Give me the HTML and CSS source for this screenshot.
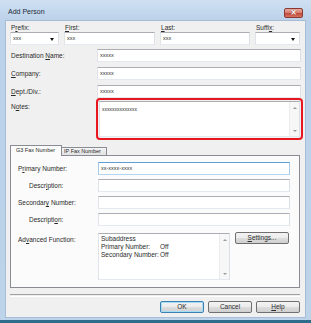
FILE: index.html
```html
<!DOCTYPE html>
<html lang="en">
<head>
    <meta charset="UTF-8">
    <meta name="viewport" content="width=device-width, initial-scale=1.0">
    <title>Add Person</title>
    <link rel="stylesheet" href="styles.css">
</head>
<body>

    <div class="window">
        <div class="titlebar">
            <span class="title">Add Person</span>
            <span class="close-btn">×</span>
        </div>

        <div class="client">
            <div class="name-grid">
                <label>P<u>r</u>efix:</label>
                <label><u>F</u>irst:</label>
                <label><u>L</u>ast:</label>
                <label>Suffi<u>x</u>:</label>
                <div class="box combo">xxx<span class="arrow"></span></div>
                <div class="box">xxx</div>
                <div class="box">xxx</div>
                <div class="box combo"><span class="arrow"></span></div>
            </div>

            <div class="form-row first">
                <label>Destination <u>N</u>ame:</label>
                <div class="box">xxxxx</div>
            </div>
            <div class="form-row">
                <label><u>C</u>ompany:</label>
                <div class="box">xxxxx</div>
            </div>
            <div class="form-row">
                <label><u>D</u>ept./Div.:</label>
                <div class="box">xxxxx</div>
            </div>

            <div class="notes-row">
                <label>N<u>o</u>tes:</label>
                <div class="highlight">
                    <div class="box textarea">
                        <span class="text">xxxxxxxxxxxxxx</span>
                        <div class="scrollbar">
                            <span class="arr-up"></span>
                            <span class="arr-down"></span>
                        </div>
                    </div>
                </div>
            </div>

            <div class="tabs">
                <div class="tab active">G3 Fax Number</div>
                <div class="tab">IP Fax Number</div>
            </div>
            <div class="panel">
                <div class="panel-row">
                    <label>P<u>r</u>imary Number:</label>
                    <div class="box focus wide">xx-xxxx-xxxx</div>
                </div>
                <div class="panel-row">
                    <label class="indent">Descr<u>i</u>ption:</label>
                    <div class="box wide"></div>
                </div>
                <div class="panel-row">
                    <label>Secondar<u>y</u> Number:</label>
                    <div class="box wide"></div>
                </div>
                <div class="panel-row">
                    <label class="indent">Descripti<u>o</u>n:</label>
                    <div class="box wide"></div>
                </div>
                <div class="panel-row advanced">
                    <label>Ad<u>v</u>anced Function:</label>
                    <div class="box listbox">
                        <div class="list-text">
                            <div>Subaddress</div>
                            <div class="pair"><span>Primary Number:</span><span>Off</span></div>
                            <div class="pair"><span>Secondary Number:</span><span>Off</span></div>
                        </div>
                        <div class="scrollbar">
                            <span class="arr-up"></span>
                            <span class="arr-down"></span>
                        </div>
                    </div>
                    <button class="btn settings"><u>S</u>ettings...</button>
                </div>
            </div>

            <div class="separator"></div>

            <div class="buttons">
                <button class="btn default">OK</button>
                <button class="btn">Cancel</button>
                <button class="btn"><u>H</u>elp</button>
            </div>
        </div>
    </div>

</body>
</html>
```

FILE: styles.css
```css
:root {
    --frame-color: #bdd3ea;
    --client-color: #f0f0f0;
    --panel-color: #fbfbfb;
    --text-color: #2a2a2a;
    --edge-color: #898c95;
    --input-border: #abadb3;
}

body {
    margin: 0;
    font-family: 'Liberation Sans', Arial, sans-serif;
    font-size: 6.5px;
    color: var(--text-color);
    background: var(--frame-color);
}

u {
    text-decoration-thickness: 0.5px;
    text-underline-offset: 1px;
}

.window {
    width: 311px;
    height: 323px;
    box-sizing: border-box;
    display: flex;
    flex-direction: column;
    padding: 0 5px 2px 5px;
    background: linear-gradient(180deg, #cfe0f2 0px, #bcd2ea 20px, #bdd3ea 100%);
    border-bottom: 3px solid #2f6c8c;
}

.titlebar {
    height: 20px;
    display: flex;
    align-items: center;
    justify-content: space-between;
    padding: 3px 3px 0 3px;
    box-sizing: border-box;
}

.title {
    font-size: 7px;
    color: #1c2a38;
}

.close-btn {
    width: 17px;
    height: 8px;
    margin-top: 2px;
    display: flex;
    align-items: center;
    justify-content: center;
    border: 1px solid #8a3a33;
    border-radius: 2px;
    background: linear-gradient(180deg, #e9a99f 0%, #d57a6d 50%, #c24a3a 55%, #d4735f 100%);
    color: #fff;
    font-family: 'DejaVu Sans', sans-serif;
    font-weight: bold;
    font-size: 8px;
    line-height: 8px;
    text-shadow: 0 0 1px #6a1d16;
}

.client {
    flex: 1;
    box-sizing: border-box;
    background: var(--client-color);
    border: 1px solid #a6bdd5;
    padding: 2px 4px 0 4px;
}

label {
    white-space: nowrap;
}

.box {
    box-sizing: border-box;
    height: 13px;
    background: #fff;
    border: 1px solid var(--input-border);
    border-color: #abadb3 #dbdfe6 #e3e9ef #e2e3ea;
    padding: 0 2px;
    line-height: 11px;
    font-size: 5.5px;
    position: relative;
}

.combo .arrow {
    position: absolute;
    right: 4px;
    top: 5px;
    border-left: 2.5px solid transparent;
    border-right: 2.5px solid transparent;
    border-top: 3px solid #111;
}

.name-grid {
    display: grid;
    grid-template-columns: 49px 91px 90px 45px;
    grid-template-rows: 9px 13px;
    column-gap: 5px;
}

.name-grid label {
    line-height: 9px;
    padding-left: 1px;
}

.form-row {
    display: grid;
    grid-template-columns: 87px 204px;
    align-items: center;
    margin-top: 5px;
}

.form-row.first {
    margin-top: 4px;
}

.form-row label {
    padding-left: 1px;
}

.notes-row {
    display: grid;
    grid-template-columns: 86px 207px;
    align-items: start;
}

.notes-row label {
    padding-left: 1px;
    margin-top: 5px;
    line-height: 8px;
}

.highlight {
    border: 2px solid #e8171f;
    border-radius: 4px;
    padding: 1px;
    height: 42px;
    box-sizing: border-box;
}

.textarea {
    height: 36px;
    display: flex;
    justify-content: space-between;
    padding: 0 0 0 2px;
}

.textarea .text {
    line-height: 8px;
    padding-top: 3px;
    font-size: 5px;
}

.scrollbar {
    width: 10px;
    display: flex;
    flex-direction: column;
    justify-content: space-between;
    align-items: center;
    padding: 5px 0 4px 0;
    box-sizing: border-box;
    background: #f7f7f7;
    border-left: 1px solid #ececec;
}

.arr-up {
    border-left: 2px solid transparent;
    border-right: 2px solid transparent;
    border-bottom: 2px solid #9a9a9a;
}

.arr-down {
    border-left: 2px solid transparent;
    border-right: 2px solid transparent;
    border-top: 2px solid #9a9a9a;
}

.tabs {
    display: flex;
    align-items: flex-end;
    height: 10px;
    margin-top: 5px;
    position: relative;
    z-index: 1;
}

.tab {
    box-sizing: border-box;
    height: 8px;
    width: 46px;
    margin-left: -1px;
    border: 1px solid var(--edge-color);
    border-bottom: none;
    background: linear-gradient(180deg, #f4f4f4, #e2e2e2);
    font-size: 5.5px;
    line-height: 7px;
    padding-left: 2px;
    white-space: nowrap;
}

.tab.active {
    height: 11px;
    width: 52px;
    margin-left: 0;
    margin-bottom: -1px;
    background: var(--panel-color);
    padding-left: 5px;
    line-height: 9px;
    position: relative;
    z-index: 2;
}

.panel {
    box-sizing: border-box;
    width: 290px;
    height: 133px;
    border: 1px solid var(--edge-color);
    background: var(--panel-color);
    padding: 6px 0 0 7px;
}

.panel-row {
    display: grid;
    grid-template-columns: 80px 192px;
    align-items: center;
    margin-bottom: 4px;
}

.panel-row label.indent {
    padding-left: 11px;
}

.box.focus {
    border-color: #5a9fd8 #a8cbeb #b4d3ef #a8cbeb;
}

.panel-row.advanced {
    grid-template-columns: 80px 132px 54px;
    column-gap: 0;
    align-items: start;
    margin-top: 7px;
}

.advanced label {
    margin-top: 3px;
}

.listbox {
    height: 47px;
    display: flex;
    justify-content: space-between;
    padding: 0 0 0 2px;
    font-size: 6.5px;
}

.list-text {
    padding-top: 1px;
    line-height: 8px;
    white-space: nowrap;
}

.pair {
    display: grid;
    grid-template-columns: 59px auto;
}

.btn {
    box-sizing: border-box;
    height: 12px;
    width: 44px;
    padding: 0;
    border: 1px solid #707070;
    border-radius: 2px;
    background: linear-gradient(180deg, #f3f3f3 0%, #ebebeb 50%, #dddddd 51%, #cfcfcf 100%);
    font-family: inherit;
    font-size: 6.5px;
    color: var(--text-color);
    line-height: 10px;
}

.btn.settings {
    width: 54px;
    margin-left: 5px;
    margin-top: -1px;
}

.btn.default {
    border-color: #3c7fb1;
    box-shadow: inset 0 0 0 1px #a6dcf4;
}

.separator {
    width: 290px;
    height: 1px;
    margin-top: 6px;
    border-top: 1px solid #a0a0a0;
    border-bottom: 1px solid #ffffff;
}

.buttons {
    display: flex;
    justify-content: flex-end;
    gap: 4px;
    width: 290px;
    margin-top: 4px;
}
```
